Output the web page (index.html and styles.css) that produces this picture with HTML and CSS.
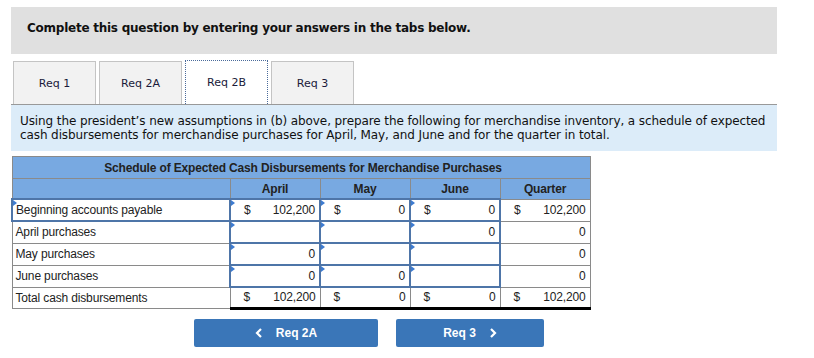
FILE: index.html
```html
<!DOCTYPE html>
<html>
<head>
<meta charset="utf-8">
<link rel="stylesheet" href="styles.css">
</head>
<body>
<div class="page">
  <div class="banner">Complete this question by entering your answers in the tabs below.</div>
  <div class="tabs">
    <div class="tab">Req 1</div>
    <div class="tab">Req 2A</div>
    <div class="tab active">Req 2B</div>
    <div class="tab">Req 3</div>
  </div>
  <div class="instr">Using the president’s new assumptions in (b) above, prepare the following for merchandise inventory, a schedule of expected cash disbursements for merchandise purchases for April, May, and June and for the quarter in total.</div>
  <table class="sched">
    <colgroup>
      <col class="c-lbl"><col class="c-num"><col class="c-num"><col class="c-num"><col class="c-num">
    </colgroup>
    <tr class="title"><th colspan="5">Schedule of Expected Cash Disbursements for Merchandise Purchases</th></tr>
    <tr class="head"><th></th><th>April</th><th>May</th><th>June</th><th>Quarter</th></tr>
    <tr>
      <td class="lbl inp">Beginning accounts payable</td>
      <td class="num inp"><span class="cur">$</span><span class="val">102,200</span></td>
      <td class="num inp"><span class="cur">$</span><span class="val">0</span></td>
      <td class="num inp"><span class="cur">$</span><span class="val">0</span></td>
      <td class="num"><span class="cur">$</span><span class="val">102,200</span></td>
    </tr>
    <tr>
      <td class="lbl">April purchases</td>
      <td class="num inp"></td>
      <td class="num inp"></td>
      <td class="num inp"><span class="val">0</span></td>
      <td class="num"><span class="val">0</span></td>
    </tr>
    <tr>
      <td class="lbl">May purchases</td>
      <td class="num inp"><span class="val">0</span></td>
      <td class="num inp"></td>
      <td class="num inp"></td>
      <td class="num"><span class="val">0</span></td>
    </tr>
    <tr>
      <td class="lbl">June purchases</td>
      <td class="num inp"><span class="val">0</span></td>
      <td class="num inp"><span class="val">0</span></td>
      <td class="num inp"></td>
      <td class="num"><span class="val">0</span></td>
    </tr>
    <tr class="total">
      <td class="lbl">Total cash disbursements</td>
      <td class="num"><span class="cur">$</span><span class="val">102,200</span></td>
      <td class="num"><span class="cur">$</span><span class="val">0</span></td>
      <td class="num"><span class="cur">$</span><span class="val">0</span></td>
      <td class="num"><span class="cur">$</span><span class="val">102,200</span></td>
    </tr>
  </table>
  <div class="nav">
    <div class="btn prev"><svg class="chev" width="8" height="10" viewBox="0 0 8 10"><path d="M6 1 L2 5 L6 9" fill="none" stroke="#fff" stroke-width="2.2"/></svg>Req 2A</div>
    <div class="btn next">Req 3<svg class="chev" width="8" height="10" viewBox="0 0 8 10"><path d="M2 1 L6 5 L2 9" fill="none" stroke="#fff" stroke-width="2.2"/></svg></div>
  </div>
</div>
</body>
</html>
```
FILE: styles.css
```css
html, body { margin: 0; padding: 0; background: #fff; }
.page { padding: 7px 0 0 11px; width: 766px; }
.banner {
  background: #e0e0e0;
  height: 47px;
  box-sizing: border-box;
  padding: 14px 0 0 16px;
  font-family: "DejaVu Sans", Verdana, sans-serif;
  font-weight: bold;
  font-size: 12px;
  letter-spacing: -0.25px;
  color: #111;
}
.tabs { display: flex; gap: 3px; padding: 7px 0 0 2px; height: 43px; }
.tab {
  width: 83px;
  box-sizing: border-box;
  height: 43px;
  background: #f2f2f2;
  border: 1px solid #c4c4c4;
  border-bottom: none;
  font-family: "DejaVu Sans", Verdana, sans-serif;
  font-size: 11px;
  color: #1a1a3a;
  display: flex; align-items: center; justify-content: center;
}
.tab.active { background: #fff; border: 1px dotted #4a6a9a; border-bottom: none; height: 44px; margin-top: -1px; position: relative; z-index: 1; }
.instr {
  background: #dcecf9;
  border-top: 1px solid #999;
  height: 47px;
  box-sizing: border-box;
  padding: 9px 0 0 9px;
  font-family: "DejaVu Sans", Verdana, sans-serif;
  font-size: 12px;
  letter-spacing: -0.1px;
  line-height: 14px;
  color: #111;
}
.sched {
  margin-top: 5px;
  border-collapse: collapse;
  font-family: "Liberation Sans", Arial, sans-serif;
  font-size: 12px;
  letter-spacing: -0.15px;
  color: #222;
  width: 578px;
  table-layout: fixed;
}
.c-lbl { width: 218px; }
.c-num { width: 90px; }
.sched th, .sched td { border: 1px solid #8a8a8a; padding: 0; white-space: nowrap; }
.sched tr.title th { background: #78a9e1; height: 21px; font-weight: bold; text-align: center; padding-left: 4px; }
.sched tr.head th { background: #78a9e1; height: 19px; font-weight: bold; text-align: center; }
.sched td { height: 20px; background: #fff; position: relative; }
.sched tr.total td { height: 19px; }
.sched td.lbl { padding-left: 3px; }
.sched td.num { padding: 0 4px 0 13px; }
.sched td.num .cur { float: left; line-height: 19px; }
.sched td.num .val { float: right; line-height: 19px; }
.sched td.inp { border: 2px solid #4e75a8; }
.sched td.inp::before {
  content: "";
  position: absolute; left: 0; top: 0;
  border-top: 3px solid transparent; border-bottom: 3px solid transparent;
  border-left: 4px solid #3d7bd0;
}
.sched tr.total td.num { border-top: 1px solid #000; border-bottom: 3px solid #000; }
.nav { display: flex; gap: 18px; padding: 9px 0 0 183px; }
.btn {
  height: 28px;
  background: #3a76b8;
  border-radius: 2px;
  color: #fff;
  font-family: "Liberation Sans", Arial, sans-serif;
  font-weight: bold;
  font-size: 12px;
  display: flex; align-items: center; justify-content: center;
}
.btn.prev { width: 184px; }
.btn.next { width: 148px; }
.prev .chev { margin-right: 13px; }
.next .chev { margin-left: 13px; }
```
